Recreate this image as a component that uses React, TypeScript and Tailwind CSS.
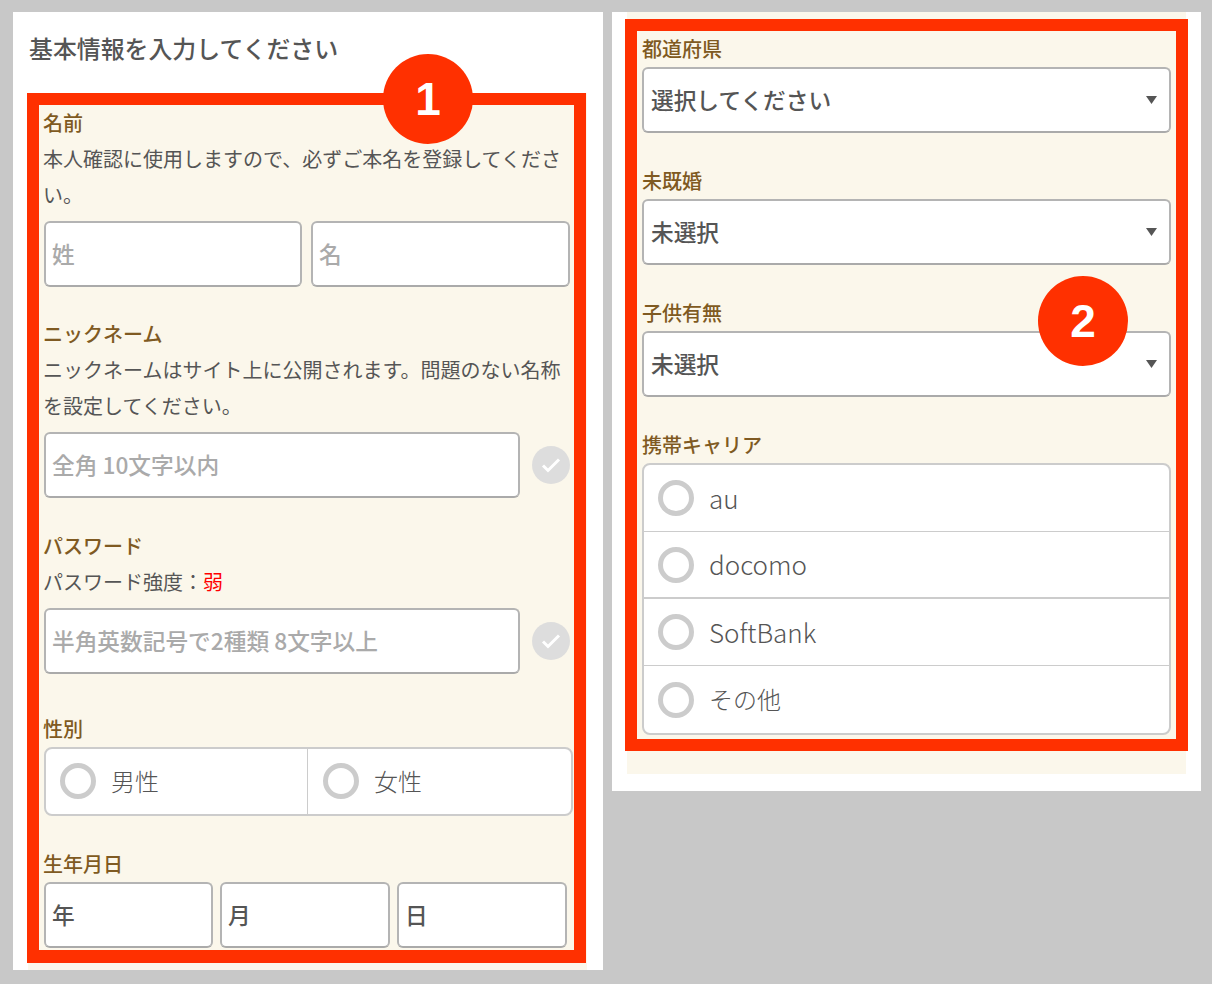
const labelClass = "block text-[20px] leading-[36px] font-medium text-[#7f5a22]";
const descClass = "text-[20px] leading-[36px] text-[#555]";
const inputClass =
  "h-[66px] min-w-0 rounded-[6px] border-2 border-[#b4b4b4] border-b-[#aaa] bg-white pl-[6px] pr-[7px] pb-[2px] text-[22.700px] font-medium text-[#555] outline-none placeholder:text-[#aaa]";

function Badge({ n, className }: { n: number; className: string }) {
  return (
    <div
      className={`absolute flex h-[90px] w-[90px] items-center justify-center rounded-full bg-[#ff3000] text-[46px] font-bold text-white ${className}`}
      style={{ fontFamily: '"Liberation Sans", sans-serif' }}
    >
      {n}
    </div>
  );
}

function CheckMark() {
  return (
    <div className="flex h-[38px] w-[38px] shrink-0 items-center justify-center rounded-full bg-[#ddd]">
      <svg width="20" height="16" viewBox="0 0 20 16" fill="none">
        <path d="M2 8.500l5 5L18 2.500" stroke="#fff" strokeWidth="3" />
      </svg>
    </div>
  );
}

function Ring() {
  return <span className="h-[36px] w-[36px] shrink-0 rounded-full border-[5px] border-[#ccc] bg-white" />;
}

function Select({
  value,
  width = "w-[529px]",
  pad = "pl-[7px]",
  arrow = true,
}: {
  value: string;
  width?: string;
  pad?: string;
  arrow?: boolean;
}) {
  return (
    <div className={`relative ${width}`}>
      <select
        className={`h-[66px] w-full appearance-none rounded-[6px] border-2 border-[#b4b4b4] border-b-[#aaa] bg-white pr-[7px] text-[22.700px] font-medium text-[#555] outline-none ${pad}`}
      >
        <option>{value}</option>
      </select>
      {arrow && (
        <svg className="pointer-events-none absolute right-[14px] top-[29px]" width="11" height="8" viewBox="0 0 11 8">
          <path d="M0 0h11L5.500 8z" fill="#555" />
        </svg>
      )}
    </div>
  );
}

function CarrierRow({ name, border = "", size = "text-[26px]" }: { name: string; border?: string; size?: string }) {
  return (
    <div className={`flex h-[67px] items-center gap-[15px] pl-[14px] ${border}`}>
      <Ring />
      <span className={`pb-[2px] font-light text-[#555] ${size}`}>{name}</span>
    </div>
  );
}

export default function App() {
  return (
    <div
      className="flex min-h-[984px] items-start gap-[9px] bg-[#c8c8c8] pl-[13px] pt-[12px]"
      style={{ fontFamily: '"Noto Sans CJK JP", "Noto Sans", sans-serif' }}
    >
      {/* left panel */}
      <div className="relative h-[958px] w-[590px] bg-white pl-[15px]">
        <h2 className="flex h-[81px] items-center pb-[10px] pl-px text-[23.900px] font-medium text-[#555]">基本情報を入力してください</h2>
        <div className="w-[559px] bg-[#fbf7eb] pb-[7px]">
          <div className="-ml-px w-[559px] border-[12px] border-b-[13px] border-[#ff3000] bg-[#fbf7eb] pb-[2px] pl-[5px]">
            <label className={`${labelClass} -ml-px`}>名前</label>
            <p className={`${descClass} -ml-px w-[526px]`}>本人確認に使用しますので、必ずご本名を登録してください。</p>
            <div className="mt-[8px] flex w-[526px] gap-[9px]">
              <input placeholder="姓" className={`${inputClass} w-[258px]`} />
              <input placeholder="名" className={`${inputClass} w-[259px]`} />
            </div>

            <label className={`${labelClass} -ml-px mt-[29px]`}>ニックネーム</label>
            <p className={`${descClass} -ml-px w-[526px]`}>ニックネームはサイト上に公開されます。問題のない名称を設定してください。</p>
            <div className="mt-[8px] flex w-[526px] items-center gap-[12px]">
              <input placeholder="全角 10文字以内" className={`${inputClass} flex-1`} />
              <CheckMark />
            </div>

            <label className={`${labelClass} -ml-px mt-[30px]`}>パスワード</label>
            <p className={`${descClass} -ml-px`}>
              パスワード強度：<span className="text-[#f00]">弱</span>
            </p>
            <div className="mt-[8px] flex w-[526px] items-center gap-[12px]">
              <input placeholder="半角英数記号で2種類 8文字以上" className={`${inputClass} flex-1`} />
              <CheckMark />
            </div>

            <label className={`${labelClass} -ml-px mt-[37px]`}>性別</label>
            <div className="flex h-[69px] w-[529px] rounded-[8px] border-2 border-[#ccc] bg-white">
              <div className="flex w-[262px] items-center gap-[15px] border-r border-[#ccc] pb-px pl-[14px]">
                <Ring />
                <span className="text-[24px] font-light text-[#555]">男性</span>
              </div>
              <div className="flex flex-1 items-center gap-[15px] pb-px pl-[15px]">
                <Ring />
                <span className="text-[24px] font-light text-[#555]">女性</span>
              </div>
            </div>

            <label className={`${labelClass} -ml-px mt-[30px]`}>生年月日</label>
            <div className="flex w-[523px] gap-[7px]">
              <Select value="年" width="w-[169px]" pad="pl-[6px]" arrow={false} />
              <Select value="月" width="w-[170px]" pad="pl-[6px]" arrow={false} />
              <Select value="日" width="w-[170px]" pad="pl-[6px]" arrow={false} />
            </div>
          </div>
        </div>
        <Badge n={1} className="left-[370px] top-[42px]" />
      </div>

      {/* right panel */}
      <div className="relative h-[779px] w-[589px] bg-white pl-[15px]">
        <div className="w-[559px] bg-[#fbf7eb] pb-[23px] pt-[7px]">
          <div className="-mx-[2px] w-[563px] border-[12px] border-[#ff3000] bg-[#fbf7eb] pb-[4px] pl-[5px]">
            <label className={labelClass}>都道府県</label>
            <Select value="選択してください" />

            <label className={`${labelClass} mt-[30px]`}>未既婚</label>
            <Select value="未選択" />

            <label className={`${labelClass} mt-[30px]`}>子供有無</label>
            <Select value="未選択" />

            <label className={`${labelClass} mt-[30px]`}>携帯キャリア</label>
            <div className="w-[529px] overflow-hidden rounded-[8px] border-2 border-[#ccc] bg-white">
              <CarrierRow name="au" border="border-b border-[#ccc]" />
              <CarrierRow name="docomo" border="border-b-2 border-[#ccc]" />
              <CarrierRow name="SoftBank" border="border-b border-[#ccc]" />
              <CarrierRow name="その他" size="text-[24px]" />
            </div>
          </div>
        </div>
        <Badge n={2} className="left-[426px] top-[264px]" />
      </div>
    </div>
  );
}
